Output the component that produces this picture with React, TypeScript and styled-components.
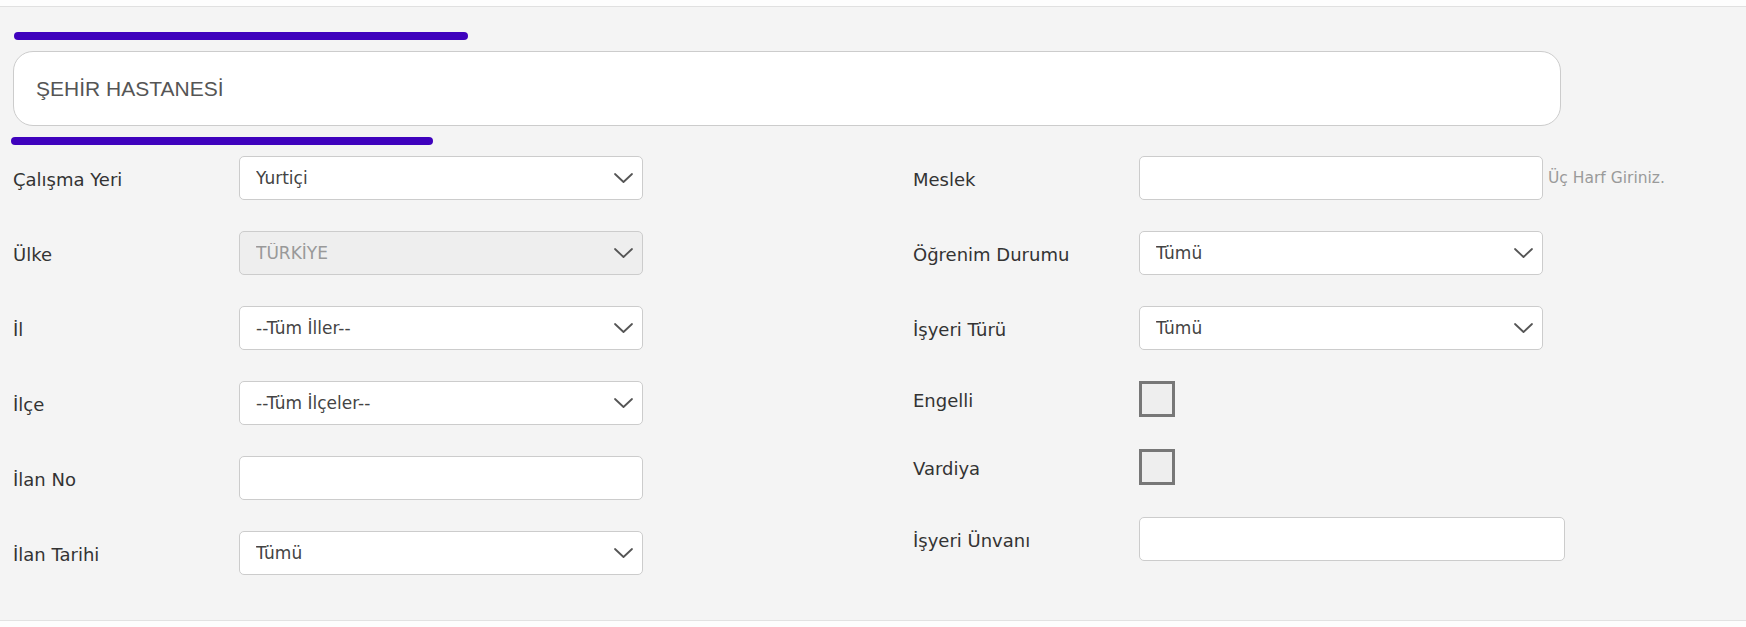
import * as React from 'react';
import styled, { createGlobalStyle } from 'styled-components';

const GlobalStyle = createGlobalStyle`
  html, body {
    margin: 0;
    padding: 0;
    background: #ffffff;
    font-family: "DejaVu Sans", Verdana, sans-serif;
  }
`;

type Field =
  | { kind: 'select'; label: string; value: string; disabled?: boolean }
  | { kind: 'input'; label: string; hint?: string; wide?: boolean }
  | { kind: 'check'; label: string };

const leftFields: Field[] = [
  { kind: 'select', label: 'Çalışma Yeri', value: 'Yurtiçi' },
  { kind: 'select', label: 'Ülke', value: 'TÜRKİYE', disabled: true },
  { kind: 'select', label: 'İl', value: '--Tüm İller--' },
  { kind: 'select', label: 'İlçe', value: '--Tüm İlçeler--' },
  { kind: 'input', label: 'İlan No' },
  { kind: 'select', label: 'İlan Tarihi', value: 'Tümü' },
];

const rightFields: Field[] = [
  { kind: 'input', label: 'Meslek', hint: 'Üç Harf Giriniz.' },
  { kind: 'select', label: 'Öğrenim Durumu', value: 'Tümü' },
  { kind: 'select', label: 'İşyeri Türü', value: 'Tümü' },
  { kind: 'check', label: 'Engelli' },
  { kind: 'check', label: 'Vardiya' },
  { kind: 'input', label: 'İşyeri Ünvanı', wide: true },
];

function Chevron() {
  return (
    <svg width="19" height="10" viewBox="0 0 19 10" fill="none">
      <path
        d="M1 1l8.5 8 8.5-8"
        stroke="#555"
        strokeWidth="1.8"
        strokeLinecap="round"
        strokeLinejoin="round"
      />
    </svg>
  );
}

function FieldRow({ field }: { field: Field }) {
  return (
    <Row $check={field.kind === 'check'}>
      <Label>{field.label}</Label>
      {field.kind === 'select' && (
        <SelectWrap>
          <Select disabled={field.disabled} defaultValue={field.value}>
            <option>{field.value}</option>
          </Select>
          <ChevronSlot>
            <Chevron />
          </ChevronSlot>
        </SelectWrap>
      )}
      {field.kind === 'input' && (
        <InputLine>
          <TextInput type="text" $wide={field.wide} />
          {field.hint && <Hint>{field.hint}</Hint>}
        </InputLine>
      )}
      {field.kind === 'check' && <Check type="checkbox" />}
    </Row>
  );
}

export default function App() {
  return (
    <>
      <GlobalStyle />
      <TopStrip />
      <Panel>
        <AccentBar $width={454} $indent={1} />
        <SearchBox>ŞEHİR HASTANESİ</SearchBox>
        <AccentBar $width={422} $indent={-2} />
        <FormGrid>
          <Column>
            {leftFields.map((f, i) => (
              <FieldRow key={`l-${i}`} field={f} />
            ))}
          </Column>
          <Column>
            {rightFields.map((f, i) => (
              <FieldRow key={`r-${i}`} field={f} />
            ))}
          </Column>
        </FormGrid>
      </Panel>
      <BottomStrip />
    </>
  );
}

const TopStrip = styled.div`
  height: 6px;
  background: #fdfdfd;
  border-bottom: 1px solid #e0e0e0;
`;

const BottomStrip = styled.div`
  height: 6px;
  background: #fdfdfd;
`;

const Panel = styled.div`
  box-sizing: border-box;
  height: 614px;
  background: #f4f4f4;
  border-bottom: 1px solid #e2e2e2;
  padding: 25px 0 0 13px;
`;

const AccentBar = styled.div<{ $width: number; $indent: number }>`
  width: ${p => p.$width}px;
  height: 8px;
  margin-left: ${p => p.$indent}px;
  border-radius: 4px;
  background: #3f02bd;
`;

const SearchBox = styled.div`
  box-sizing: border-box;
  width: 1548px;
  height: 75px;
  margin: 11px 0;
  padding-left: 22px;
  display: flex;
  align-items: center;
  background: #ffffff;
  border: 1px solid #cccccc;
  border-radius: 20px;
  font-family: "Liberation Sans", Arial, sans-serif;
  font-size: 21px;
  color: #555555;
`;

const FormGrid = styled.div`
  display: grid;
  grid-template-columns: 900px 1fr;
  margin-top: 11px;
`;

const Column = styled.div`
  display: flex;
  flex-direction: column;
  gap: 31px;
`;

const Row = styled.div<{ $check?: boolean }>`
  display: grid;
  grid-template-columns: 226px auto;
  align-items: center;
  min-height: ${p => (p.$check ? 36 : 44)}px;
  ${p => (p.$check ? 'margin-bottom: 1px;' : '')}
`;

const Label = styled.span`
  font-size: 18px;
  color: #333333;
  position: relative;
  top: 1px;
`;

const SelectWrap = styled.div`
  position: relative;
  width: 404px;
  height: 44px;
`;

const Select = styled.select`
  box-sizing: border-box;
  width: 100%;
  height: 100%;
  appearance: none;
  -webkit-appearance: none;
  padding: 0 40px 0 16px;
  border: 1px solid #cccccc;
  border-radius: 5px;
  background: #ffffff;
  font-family: "DejaVu Sans", Verdana, sans-serif;
  font-size: 17px;
  color: #444444;
  outline: none;

  &:disabled {
    background: #eeeeee;
    color: #999999;
    opacity: 1;
  }
`;

const ChevronSlot = styled.span`
  position: absolute;
  right: 10px;
  top: 50%;
  height: 10px;
  margin-top: -5px;
  display: flex;
  pointer-events: none;
`;

const InputLine = styled.div`
  display: flex;
  align-items: center;
  gap: 5px;
`;

const TextInput = styled.input<{ $wide?: boolean }>`
  box-sizing: border-box;
  width: ${p => (p.$wide ? 426 : 404)}px;
  height: 44px;
  padding: 0 16px;
  border: 1px solid #cccccc;
  border-radius: 5px;
  background: #ffffff;
  font-family: "DejaVu Sans", Verdana, sans-serif;
  font-size: 17px;
  outline: none;
`;

const Hint = styled.span`
  font-size: 15.5px;
  color: #9a9a9a;
`;

const Check = styled.input`
  box-sizing: border-box;
  appearance: none;
  -webkit-appearance: none;
  width: 36px;
  height: 36px;
  margin: 0;
  border: 3px solid #777777;
  background: #eeeeee;
`;
